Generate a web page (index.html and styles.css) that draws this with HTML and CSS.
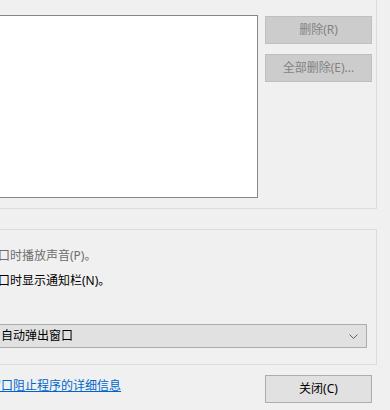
FILE: index.html
```html
<!DOCTYPE html>
<html lang="zh-CN">
<head>
<meta charset="utf-8">
<link rel="stylesheet" href="styles.css">
</head>
<body>
<div class="dialog">
  <div class="group group-top">
    <div class="listbox"></div>
    <div class="side-buttons">
      <button class="btn btn-disabled">删除(R)</button>
      <button class="btn btn-disabled">全部删除(E)...</button>
    </div>
  </div>
  <div class="group group-bottom">
    <div class="option option-disabled">窗口时播放声音(P)。</div>
    <div class="option">窗口时显示通知栏(N)。</div>
    <div class="combo">
      <span class="combo-text">自动弹出窗口</span>
      <svg class="chevron" width="9" height="6" viewBox="0 0 9 6"><path d="M0.5 0.5 L4.5 4.5 L8.5 0.5" fill="none" stroke="#606060" stroke-width="1"/></svg>
    </div>
  </div>
  <div class="footer">
    <a class="link" href="#">窗口阻止程序的详细信息</a>
    <button class="btn btn-close">关闭(C)</button>
  </div>
</div>
</body>
</html>
```
FILE: styles.css
```css
* { box-sizing: border-box; }
html, body { margin: 0; padding: 0; }
body {
  background: #f0f0f0;
  font-family: "Noto Sans", "Noto Sans CJK SC", sans-serif;
  font-size: 12px;
  color: #000;
  overflow: hidden;
}
.dialog {
  width: 390px;
  height: 410px;
  overflow: hidden;
}
.group {
  border: 1px solid #dcdcdc;
  width: 397px;
  margin-left: -20px;
}
.group-top {
  margin-top: -20px;
  height: 229px;
  display: flex;
  align-items: flex-start;
}
.listbox {
  margin-top: 34px;
  width: 277px;
  height: 183px;
  background: #fff;
  border: 1px solid #828790;
}
.side-buttons {
  margin-left: 7px;
  margin-top: 35px;
  display: flex;
  flex-direction: column;
  gap: 10px;
}
.btn {
  width: 107px;
  height: 28px;
  font-family: inherit;
  font-size: 12px;
  padding: 0;
  line-height: 16px;
  text-align: center;
}
.btn-disabled {
  background: #cccccc;
  border: 1px solid #bfbfbf;
  color: #838383;
}
.group-bottom {
  margin-top: 20px;
  height: 136px;
  padding: 18px 9px 15px 0;
}
.option {
  margin-left: 5px;
  line-height: 16px;
  height: 16px;
  white-space: nowrap;
}
.option + .option { margin-top: 9px; }
.option-disabled { color: #6d6d6d; }
.combo {
  margin-top: 35px;
  height: 24px;
  background: #e1e1e1;
  border: 1px solid #adadad;
  display: flex;
  align-items: center;
  justify-content: space-between;
  padding: 0 8px 0 19px;
}
.combo-text { line-height: 16px; }
.chevron { display: block; margin-top: 1px; }
.footer {
  display: flex;
  justify-content: space-between;
  align-items: flex-start;
  margin-left: -11px;
  width: 383px;
}
.link {
  margin-top: 13px;
  line-height: 16px;
  color: #0066cc;
  text-decoration: underline;
}
.btn-close {
  margin-top: 10px;
  background: #e1e1e1;
  border: 1px solid #adadad;
  color: #000;
}
```
